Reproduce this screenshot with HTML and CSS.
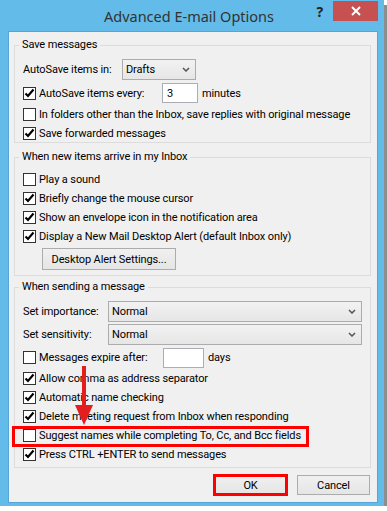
FILE: index.html
```html
<!DOCTYPE html>
<html lang="en">
<head>
    <meta charset="UTF-8">
    <meta name="viewport" content="width=device-width, initial-scale=1.0">
    <title>Advanced E-mail Options</title>
    <link rel="stylesheet" href="styles.css">
</head>
<body>
    <div class="window">
        <div class="titlebar">
            <span></span>
            <span class="title">Advanced E-mail Options</span>
            <div class="tb-buttons">
                <span class="help">?</span>
                <span class="close"><svg width="10" height="10" viewBox="0 0 10 10"><path d="M1 1L9 9M9 1L1 9" stroke="#fff" stroke-width="2"/></svg></span>
            </div>
        </div>
        <div class="panel">
            <fieldset class="group g1">
                <legend>Save messages</legend>
                <div class="row h23">
                    <span class="lbl w-autosave">AutoSave items in:</span>
                    <div class="combo drafts">Drafts<svg class="chev" width="8" height="5" viewBox="0 0 8 5"><path d="M1 1L4 4L7 1" fill="none" stroke="#555" stroke-width="1.5"/></svg></div>
                </div>
                <div class="row h24">
                    <span class="cb on"><svg width="11" height="11" viewBox="0 0 11 11"><path d="M1.5 5.5L4 8L9.5 1.5" fill="none" stroke="#000" stroke-width="2.2"/></svg></span>
                    <span class="lbl w-every">AutoSave items every:</span>
                    <span class="textbox tb-min">3</span>
                    <span class="after">minutes</span>
                </div>
                <div class="row">
                    <span class="cb"></span>
                    <span>In folders other than the Inbox, save replies with original message</span>
                </div>
                <div class="row h18">
                    <span class="cb on"><svg width="11" height="11" viewBox="0 0 11 11"><path d="M1.5 5.5L4 8L9.5 1.5" fill="none" stroke="#000" stroke-width="2.2"/></svg></span>
                    <span>Save forwarded messages</span>
                </div>
            </fieldset>

            <fieldset class="group g2">
                <legend>When new items arrive in my Inbox</legend>
                <div class="row">
                    <span class="cb"></span>
                    <span>Play a sound</span>
                </div>
                <div class="row">
                    <span class="cb on"><svg width="11" height="11" viewBox="0 0 11 11"><path d="M1.5 5.5L4 8L9.5 1.5" fill="none" stroke="#000" stroke-width="2.2"/></svg></span>
                    <span>Briefly change the mouse cursor</span>
                </div>
                <div class="row">
                    <span class="cb on"><svg width="11" height="11" viewBox="0 0 11 11"><path d="M1.5 5.5L4 8L9.5 1.5" fill="none" stroke="#000" stroke-width="2.2"/></svg></span>
                    <span>Show an envelope icon in the notification area</span>
                </div>
                <div class="row">
                    <span class="cb on"><svg width="11" height="11" viewBox="0 0 11 11"><path d="M1.5 5.5L4 8L9.5 1.5" fill="none" stroke="#000" stroke-width="2.2"/></svg></span>
                    <span>Display a New Mail Desktop Alert (default Inbox only)</span>
                </div>
                <button class="btn btn-alert">Desktop Alert Settings...</button>
            </fieldset>

            <fieldset class="group g3">
                <legend>When sending a message</legend>
                <div class="row h23">
                    <span class="lbl w-set">Set importance:</span>
                    <div class="combo wide">Normal<svg class="chev" width="8" height="5" viewBox="0 0 8 5"><path d="M1 1L4 4L7 1" fill="none" stroke="#555" stroke-width="1.5"/></svg></div>
                </div>
                <div class="row h23">
                    <span class="lbl w-set">Set sensitivity:</span>
                    <div class="combo wide">Normal<svg class="chev" width="8" height="5" viewBox="0 0 8 5"><path d="M1 1L4 4L7 1" fill="none" stroke="#555" stroke-width="1.5"/></svg></div>
                </div>
                <div class="row h23">
                    <span class="cb"></span>
                    <span class="lbl w-expire">Messages expire after:</span>
                    <span class="textbox tb-days"></span>
                    <span class="after">days</span>
                </div>
                <div class="row">
                    <span class="cb on"><svg width="11" height="11" viewBox="0 0 11 11"><path d="M1.5 5.5L4 8L9.5 1.5" fill="none" stroke="#000" stroke-width="2.2"/></svg></span>
                    <span>Allow comma as address separator</span>
                </div>
                <div class="row">
                    <span class="cb on"><svg width="11" height="11" viewBox="0 0 11 11"><path d="M1.5 5.5L4 8L9.5 1.5" fill="none" stroke="#000" stroke-width="2.2"/></svg></span>
                    <span>Automatic name checking</span>
                </div>
                <div class="row">
                    <span class="cb on"><svg width="11" height="11" viewBox="0 0 11 11"><path d="M1.5 5.5L4 8L9.5 1.5" fill="none" stroke="#000" stroke-width="2.2"/></svg></span>
                    <span>Delete meeting request from Inbox when responding</span>
                </div>
                <div class="row marked">
                    <span class="cb"></span>
                    <span>Suggest names while completing To, Cc, and Bcc fields</span>
                    <span class="mark"></span>
                    <svg class="arrow" width="18" height="59" viewBox="0 0 18 59"><path d="M7 0H11V40H7Z M0 39H18L9 59Z" fill="#e31e1e"/></svg>
                </div>
                <div class="row">
                    <span class="cb on"><svg width="11" height="11" viewBox="0 0 11 11"><path d="M1.5 5.5L4 8L9.5 1.5" fill="none" stroke="#000" stroke-width="2.2"/></svg></span>
                    <span>Press CTRL +ENTER to send messages</span>
                </div>
            </fieldset>

            <div class="actions">
                <button class="btn btn-ok">OK</button>
                <button class="btn">Cancel</button>
            </div>
        </div>
    </div>
</body>
</html>
```

FILE: styles.css
```css
* { box-sizing: border-box; }
body { margin: 0; background: #fff; font-family: Roboto, "Noto Sans", sans-serif; font-size: 11px; letter-spacing: -0.12px; color: #000; }

.window { width: 384px; height: 506px; background: #62bbe9; box-shadow: 3px 5px 0 #8d8d8d; padding: 0 6px 3px 8px; display: flex; flex-direction: column; }
.titlebar { height: 31px; margin: 0 -6px 0 -8px; padding-right: 6px; display: grid; grid-template-columns: 1fr auto 1fr; align-items: center; }
.title { font-family: "Noto Sans", sans-serif; font-size: 14.5px; letter-spacing: 0; color: #333; }
.tb-buttons { align-self: start; display: flex; justify-content: flex-end; align-items: center; gap: 10px; padding-top: 1px; }
.help { font-family: "Noto Sans", sans-serif; font-weight: bold; font-size: 14px; color: #222; }
.close { width: 45px; height: 20px; background: #c75050; display: flex; align-items: center; justify-content: center; }

.panel { flex: 1; background: #f0f0f0; border: 1px solid #55a6d6; padding: 0 6px 0 5px; }

.group { margin: 0; min-width: 0; border: 1px solid #dcdcdc; padding: 6px 0 0 8px; }
.group legend { padding: 0 3px; margin-left: -4px; line-height: 14px; }
.g1 { margin-top: 6px; }
.g2 { margin-top: 7px; padding-bottom: 5px; }
.g3 { margin-top: 4px; padding-bottom: 3px; }

.row { height: 19px; display: flex; align-items: center; white-space: nowrap; }
.row.h18 { height: 18px; }
.row.h23 { height: 23px; }
.row.h24 { height: 24px; }

.cb { width: 13px; height: 13px; flex: none; background: #fff; border: 1px solid #333; margin-right: 3px; display: flex; align-items: center; justify-content: center; }
.lbl { flex: none; }
.w-autosave { width: 99px; }
.w-every { width: 123px; }
.w-set { width: 85px; }
.w-expire { width: 124px; }

.combo { height: 21px; border: 1px solid #acacac; background: linear-gradient(#f2f2f2, #e6e6e6); display: flex; align-items: center; justify-content: space-between; padding: 0 5px 0 3px; }
.combo.drafts { width: 74px; }
.combo.wide { width: 254px; }

.textbox { height: 20px; background: #fff; border: 1px solid #abadb3; padding-left: 4px; display: flex; align-items: center; }
.tb-min { width: 36px; }
.tb-days { width: 41px; }
.after { margin-left: 4px; }

.btn { font-family: inherit; font-size: 11px; letter-spacing: inherit; color: #000; height: 20px; width: 73px; padding: 0; white-space: nowrap; border: 1px solid #acacac; background: linear-gradient(#f0f0f0, #e5e5e5); }
.btn-alert { display: block; width: 134px; height: 22px; margin: 2px 0 0 19px; }
.btn-ok { outline: 3px solid #f00; outline-offset: -2px; }

.actions { display: flex; justify-content: flex-end; gap: 10px; margin-top: 7px; padding-right: 1px; }

.marked { position: relative; }
.mark { position: absolute; left: -11px; top: 0; width: 297px; height: 21px; border: 3px solid #f00; }
.arrow { position: absolute; left: 52px; top: -60px; }
```
